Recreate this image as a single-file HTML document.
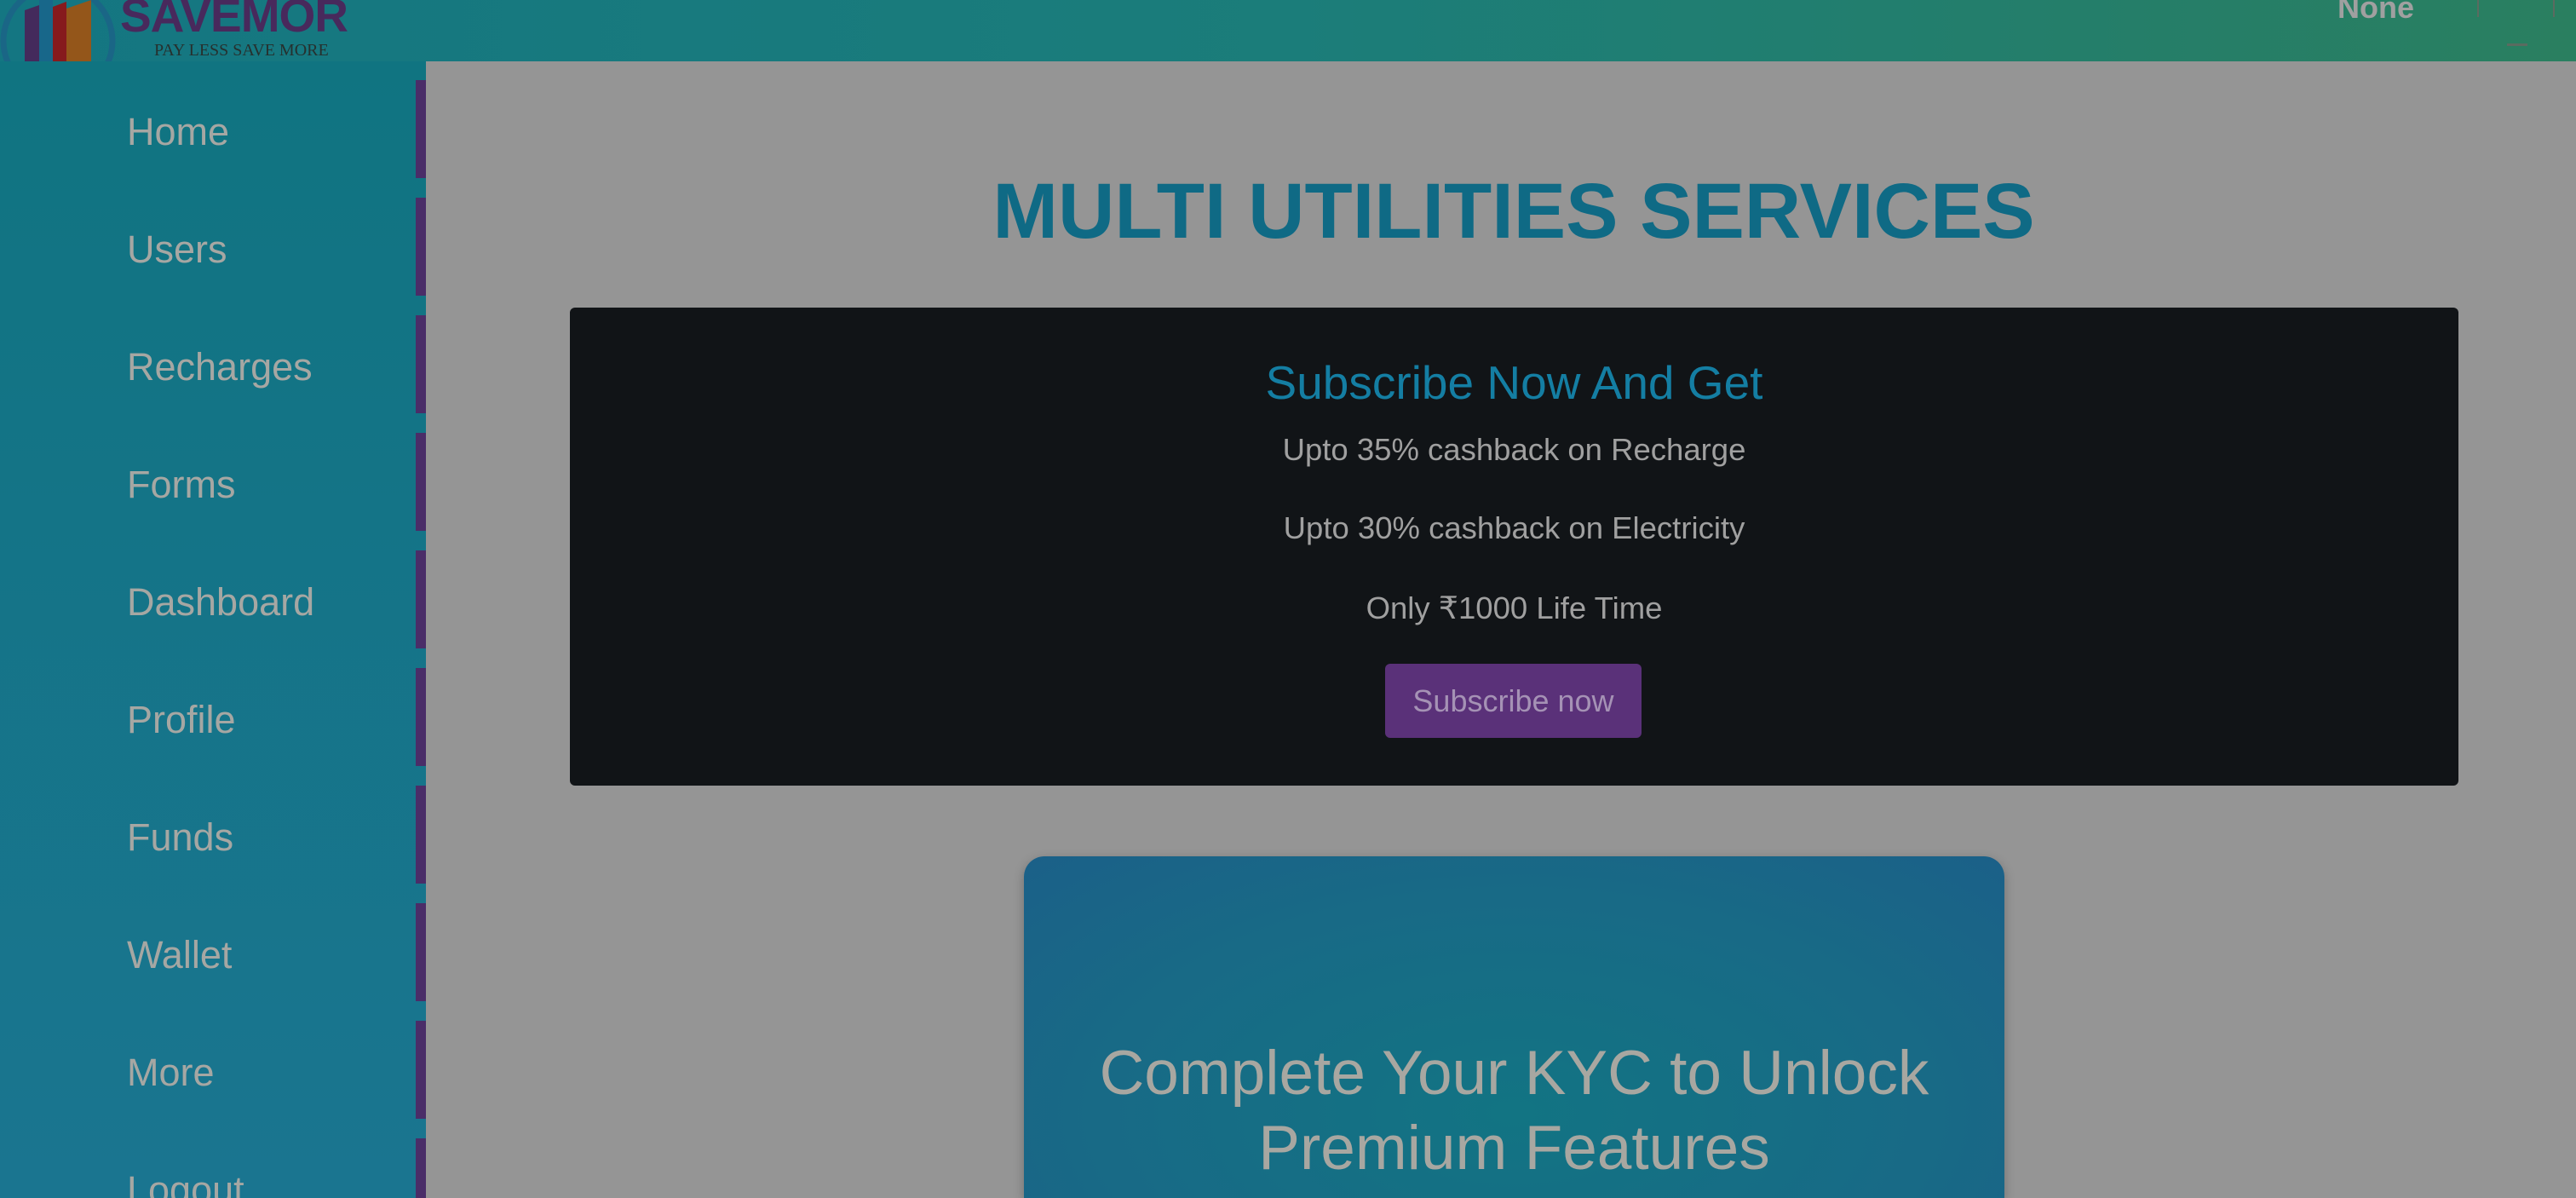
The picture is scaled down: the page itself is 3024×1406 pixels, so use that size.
<!DOCTYPE html>
<html><head><meta charset="utf-8"><style>
*{margin:0;padding:0;box-sizing:border-box}
html,body{width:3024px;height:1406px;overflow:hidden}
body{background:#959595;font-family:"Liberation Sans",sans-serif;position:relative}
.hdr{position:absolute;left:0;top:0;width:3024px;height:72px;background:linear-gradient(90deg,#147682,#1b7d7a 50%,#2a7f60)}
.side{position:absolute;left:0;top:72px;width:500px;height:1334px;background:linear-gradient(180deg,#107481,#1a7590)}
.item{position:absolute;left:0;width:500px;height:115px}
.item span{position:absolute;left:149px;top:35px;font-size:45px;color:#a6a7a3}
.item i{position:absolute;right:0;top:0;width:12px;height:100%;background:#4a2d68}
.title{position:absolute;left:515px;width:2524px;top:196px;text-align:center;font-size:92px;font-weight:bold;color:#0f6a85}
.box{position:absolute;left:669px;top:361px;width:2217px;height:561px;background:#111417;border-radius:6px;text-align:center}
.kyc{position:absolute;left:1202px;top:1005px;width:1151px;height:401px;border-radius:24px 24px 0 0;background:radial-gradient(ellipse at 50% 75%,#127483,#186a86 60%,#1b6088);box-shadow:0 4px 12px rgba(0,0,0,.25);text-align:center}
</style></head><body>
<div class="hdr"></div>
<svg style="position:absolute;left:0;top:0" width="140" height="120" viewBox="0 0 140 120">
<circle cx="68" cy="48" r="64" fill="none" stroke="#1a6686" stroke-width="7"/>
<polygon points="29,12 46,6 46,94 29,92" fill="#442a5c"/>
<polygon points="46,0 62,0 62,98 46,96" fill="#18678a"/>
<polygon points="62,8 78,2 78,98 62,98" fill="#861a1d"/>
<polygon points="78,10 107,0 107,90 78,96" fill="#94561a"/>
</svg>
<div style="position:absolute;left:141px;top:-9px;font-size:55px;line-height:55px;font-weight:bold;color:#48295c;letter-spacing:-1px">SAVEMOR</div>
<div style="position:absolute;left:181px;top:48px;font-family:'Liberation Serif',serif;font-size:20px;line-height:22px;color:#26302e">PAY LESS SAVE MORE</div>
<div style="position:absolute;left:2744px;top:-12px;font-size:36px;font-weight:bold;color:#a0a0a0">None</div>
<div style="position:absolute;left:2908px;top:0;width:91px;height:20px;border-left:2px solid #5a6b60;border-right:2px solid #5a6b60"></div>
<div style="position:absolute;left:2943px;top:51px;width:24px;height:3px;background:#5a6b60"></div>
<div class="side">
<div class="item" style="top:22px"><span>Home</span><i></i></div>
<div class="item" style="top:160px"><span>Users</span><i></i></div>
<div class="item" style="top:298px"><span>Recharges</span><i></i></div>
<div class="item" style="top:436px"><span>Forms</span><i></i></div>
<div class="item" style="top:574px"><span>Dashboard</span><i></i></div>
<div class="item" style="top:712px"><span>Profile</span><i></i></div>
<div class="item" style="top:850px"><span>Funds</span><i></i></div>
<div class="item" style="top:988px"><span>Wallet</span><i></i></div>
<div class="item" style="top:1126px"><span>More</span><i></i></div>
<div class="item" style="top:1264px"><span>Logout</span><i></i></div>
</div>
<div class="title">MULTI UTILITIES SERVICES</div>
<div class="box">
<div style="position:absolute;width:100%;top:56px;font-size:55px;color:#147ea3">Subscribe Now And Get</div>
<div style="position:absolute;width:100%;top:146px;font-size:36.5px;color:#a0a0a0">Upto 35% cashback on Recharge</div>
<div style="position:absolute;width:100%;top:238px;font-size:36.5px;color:#a0a0a0">Upto 30% cashback on Electricity</div>
<div style="position:absolute;width:100%;top:331px;font-size:36.5px;color:#a0a0a0">Only ₹1000 Life Time</div>
<div style="position:absolute;left:957px;top:418px;width:301px;height:87px;background:#5a3179;border-radius:6px;font-size:36px;color:#a592b5;line-height:87px">Subscribe now</div>
</div>
<div class="kyc">
<div style="position:absolute;width:100%;top:211px;font-size:73px;line-height:88px;color:#a8a7a1">Complete Your KYC to Unlock<br>Premium Features</div>
</div>
</body></html>
